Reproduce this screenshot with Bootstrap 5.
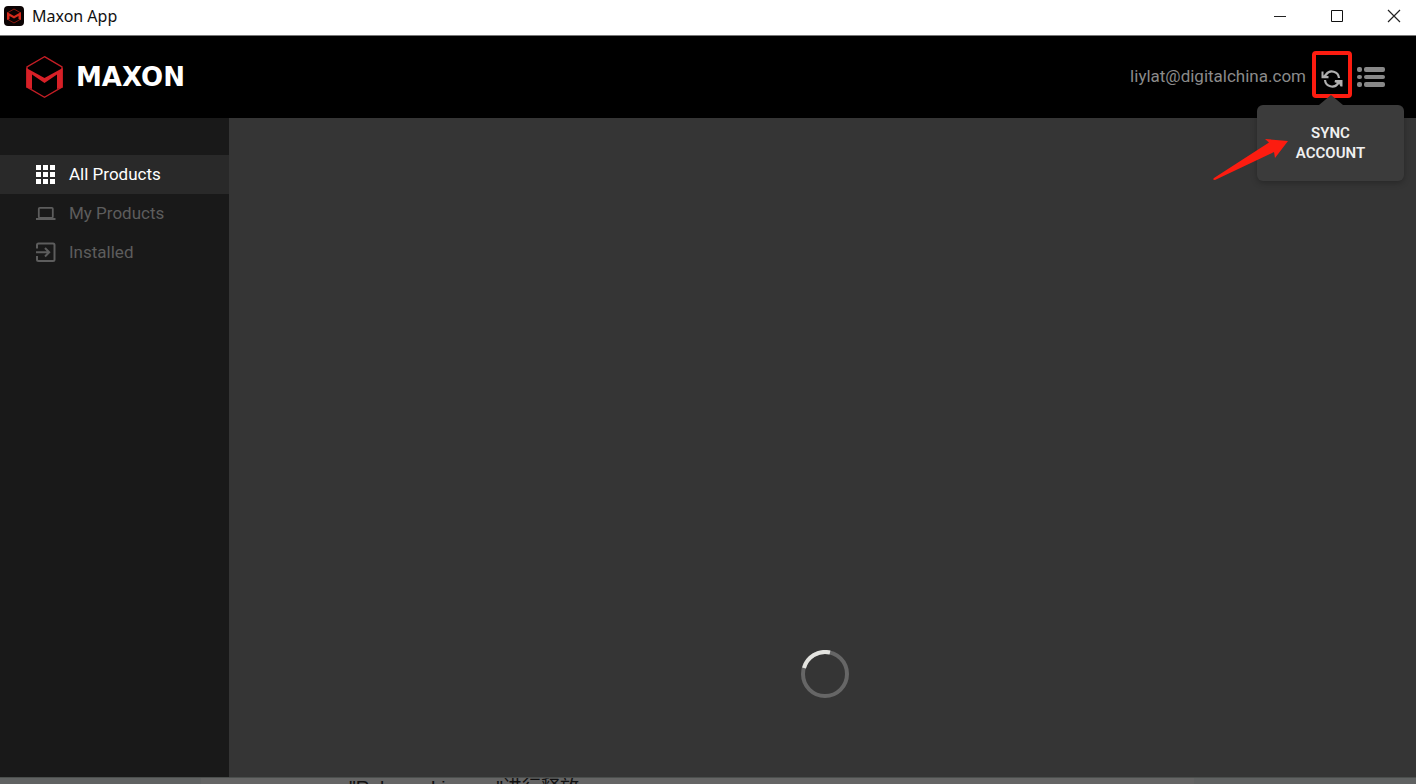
<!DOCTYPE html>
<html lang="en">
<head>
<meta charset="utf-8">
<meta name="viewport" content="width=device-width, initial-scale=1">
<title>Maxon App</title>
<link href="https://cdn.jsdelivr.net/npm/bootstrap@5.3.0/dist/css/bootstrap.min.css" rel="stylesheet">
<style>
body{font-family:Roboto,"Liberation Sans",sans-serif;background:#353535;color:#fff;height:100vh}
svg{display:block;flex:none}
.titlebar{height:36px;background:#fff;color:#111;border-bottom:1px solid #777;padding-bottom:4px;font:16px/20px "Noto Sans",sans-serif}
.bare{border:0;background:none;padding:0;color:inherit}
.win-btn{width:57px;height:30px;display:flex;align-items:center;justify-content:center}
.win-group{margin-right:-6px}
.topbar{height:82px;background:#000}
.wordmark{font:bold 26px/30px "DejaVu Sans",sans-serif;color:#fff}
.account{font-size:17px;line-height:24px;color:#8b8b8b;margin-right:6px;padding-bottom:2px}
.sync-wrap{padding-bottom:6px}
.sync{width:40px;height:47px;border:4px solid #fc1c10;border-radius:4px;color:#b0b0b0;padding:10px 0 0 5px}
.menu-btn{color:#888;margin:0 31px 0 5px}
.sync-tip{position:absolute;top:54px;right:-52px;width:147px;height:76px;background:#3b3b3b;border-radius:6px;box-shadow:0 2px 6px #0004;font-size:15px;font-weight:600;line-height:20px;color:#f0f0f0;z-index:3;padding:18px 32px}
.sync-tip::before{content:"";position:absolute;left:62px;top:-10px;border:solid transparent;border-width:0 12px 10px;border-bottom-color:#3b3b3b}
.pointer{position:absolute;left:-45px;top:32px}
.side{width:229px;background:#191919;padding-top:37px}
.side a{height:39px;padding:0 0 2px 36px;gap:13px;font-size:17px;line-height:24px;color:#5d5d5d;text-decoration:none}
.side a.active{background:#292929;color:#fff}
.content-pane{padding-bottom:79px;padding-left:4px}
.loader{width:48px;height:48px}
.behind{height:7px;background:#606262;border-top:1px solid #4b4f4d;overflow:hidden}
.behind .sheet{margin:0 222px 0 201px;background:#656565;padding-left:148px;font:19px/20px "Liberation Sans","Noto Sans CJK SC",sans-serif;color:#111}
</style>
</head>
<body class="d-flex flex-column overflow-hidden">
<header class="titlebar d-flex align-items-center flex-shrink-0">
  <svg class="ms-1" width="20" height="20" viewBox="0 0 20 20"><rect width="20" height="20" rx="4" fill="#0b0303"/><path d="M10 3 16 6.500V13.500L10 17 4 13.500V6.500Z" fill="none" stroke="#8d1910"/><path d="M3 6 10 10 17 6V14L14.500 13V10L10 12.500 5.500 10V13L3 14Z" fill="#d62a1c"/></svg>
  <span class="me-auto ps-2 ms-n1">Maxon App</span>
  <div class="win-group d-flex">
    <button class="bare win-btn" aria-label="Minimize"><svg width="14" height="14" viewBox="0 0 14 14"><path d="M1 7.500H13" stroke="#222"/></svg></button>
    <button class="bare win-btn" aria-label="Maximize"><svg width="14" height="14" viewBox="0 0 14 14"><path d="M1.500 1.500H12.500V12.500H1.500Z" fill="none" stroke="#111"/></svg></button>
    <button class="bare win-btn" aria-label="Close"><svg width="14" height="14" viewBox="0 0 14 14"><path d="M1 1 13 13M13 1 1 13" stroke="#222" stroke-width="1.200"/></svg></button>
  </div>
</header>
<nav class="topbar d-flex align-items-center flex-shrink-0" aria-label="Account">
  <svg class="ms-4" width="40" height="44" viewBox="0 0 40 44"><path d="M20.500 1.700 38 12V32L20.500 42.300 3 32V12Z" fill="none" stroke="#c41e25" stroke-width="1.400"/><path d="M2.300 13 20.500 23 38.700 13V32.500L33 34V19.500L20.500 28 8 19.500V34L2.300 32.500Z" fill="#d72027"/></svg>
  <span class="wordmark ms-2 me-auto ps-1">MAXON</span>
  <span class="account">liylat@digitalchina.com</span>
  <div class="sync-wrap position-relative">
    <button class="bare sync d-block" aria-label="Sync account" aria-describedby="tip"><svg width="22" height="18" viewBox="0 0 22 18"><path d="M18 8A7.200 7.200 0 0 0 5 4.500L3 7M4 10A7.200 7.200 0 0 0 17 13.500L19 11" fill="none" stroke="currentColor" stroke-width="2.200"/><path d="M.5 1.500 2.500 1.500 2.500 5.500 7.500 6 7.500 8.200H.5ZM21.500 16.500 19.500 16.500 18 13.500 13.500 12.200 14 10H21.500Z" fill="currentColor"/></svg></button>
    <div class="sync-tip text-center" id="tip" role="tooltip">SYNC ACCOUNT
      <svg class="pointer" width="78" height="46" viewBox="0 0 78 46"><path d="M2 41 57 5.500 53 2 76 4 63 21 62 15 3 43Q0 43 2 41Z" fill="#fc1c10"/></svg>
    </div>
  </div>
  <button class="bare menu-btn" aria-label="Menu"><svg width="28" height="22" viewBox="0 0 28 22" fill="currentColor"><rect y="1" width="5" height="5" rx="2"/><rect x="7" y="1" width="21" height="5" rx="2"/><rect y="9" width="5" height="4" rx="2"/><rect x="7" y="9" width="21" height="4" rx="2"/><rect y="16" width="5" height="5" rx="2"/><rect x="7" y="16" width="21" height="5" rx="2"/></svg></button>
</nav>
<div class="d-flex flex-grow-1">
  <nav class="side flex-shrink-0" aria-label="Products">
    <a class="active d-flex align-items-center" href="#" aria-current="page"><svg width="20" height="20" viewBox="0 0 20 20" fill="currentColor"><path d="M0 1h5v5H0zM7 1h5v5H7zM14 1h5v5h-5zM0 8h5v5H0zM7 8h5v5H7zM14 8h5v5h-5zM0 15h5v5H0zM7 15h5v5H7zM14 15h5v5h-5z"/></svg>All Products</a>
    <a class="d-flex align-items-center" href="#"><svg width="20" height="20" viewBox="0 0 20 20" fill="none" stroke="currentColor" stroke-width="1.800"><rect x="2.800" y="4.800" width="14" height="10" rx="1"/><path d="M0 16H19.500" stroke-width="2"/></svg>My Products</a>
    <a class="d-flex align-items-center" href="#"><svg width="20" height="20" viewBox="0 0 20 20" fill="none" stroke="currentColor" stroke-width="2"><path d="M1 6.500V3Q1 1.500 2.500 1.500H17Q18.500 1.500 18.500 3V17.500Q18.500 19 17 19H2.500Q1 19 1 17.500V14M0 10.300H13M9 6 13.200 10.300 9 14.500"/></svg>Installed</a>
  </nav>
  <main class="content-pane flex-grow-1 d-flex align-items-end justify-content-center">
    <svg class="loader" viewBox="0 0 48 48" role="img" aria-label="Loading" fill="none" stroke-width="4"><circle cx="24" cy="24" r="22" stroke="#666"/><path d="M3 18A22 22 0 0 1 29 2.500" stroke="#e4e4e0"/></svg>
  </main>
</div>
<div class="behind flex-shrink-0"><div class="sheet">"Release License"进行释放</div></div>
<script src="https://cdn.jsdelivr.net/npm/bootstrap@5.3.0/dist/js/bootstrap.bundle.min.js"></script>
</body>
</html>
